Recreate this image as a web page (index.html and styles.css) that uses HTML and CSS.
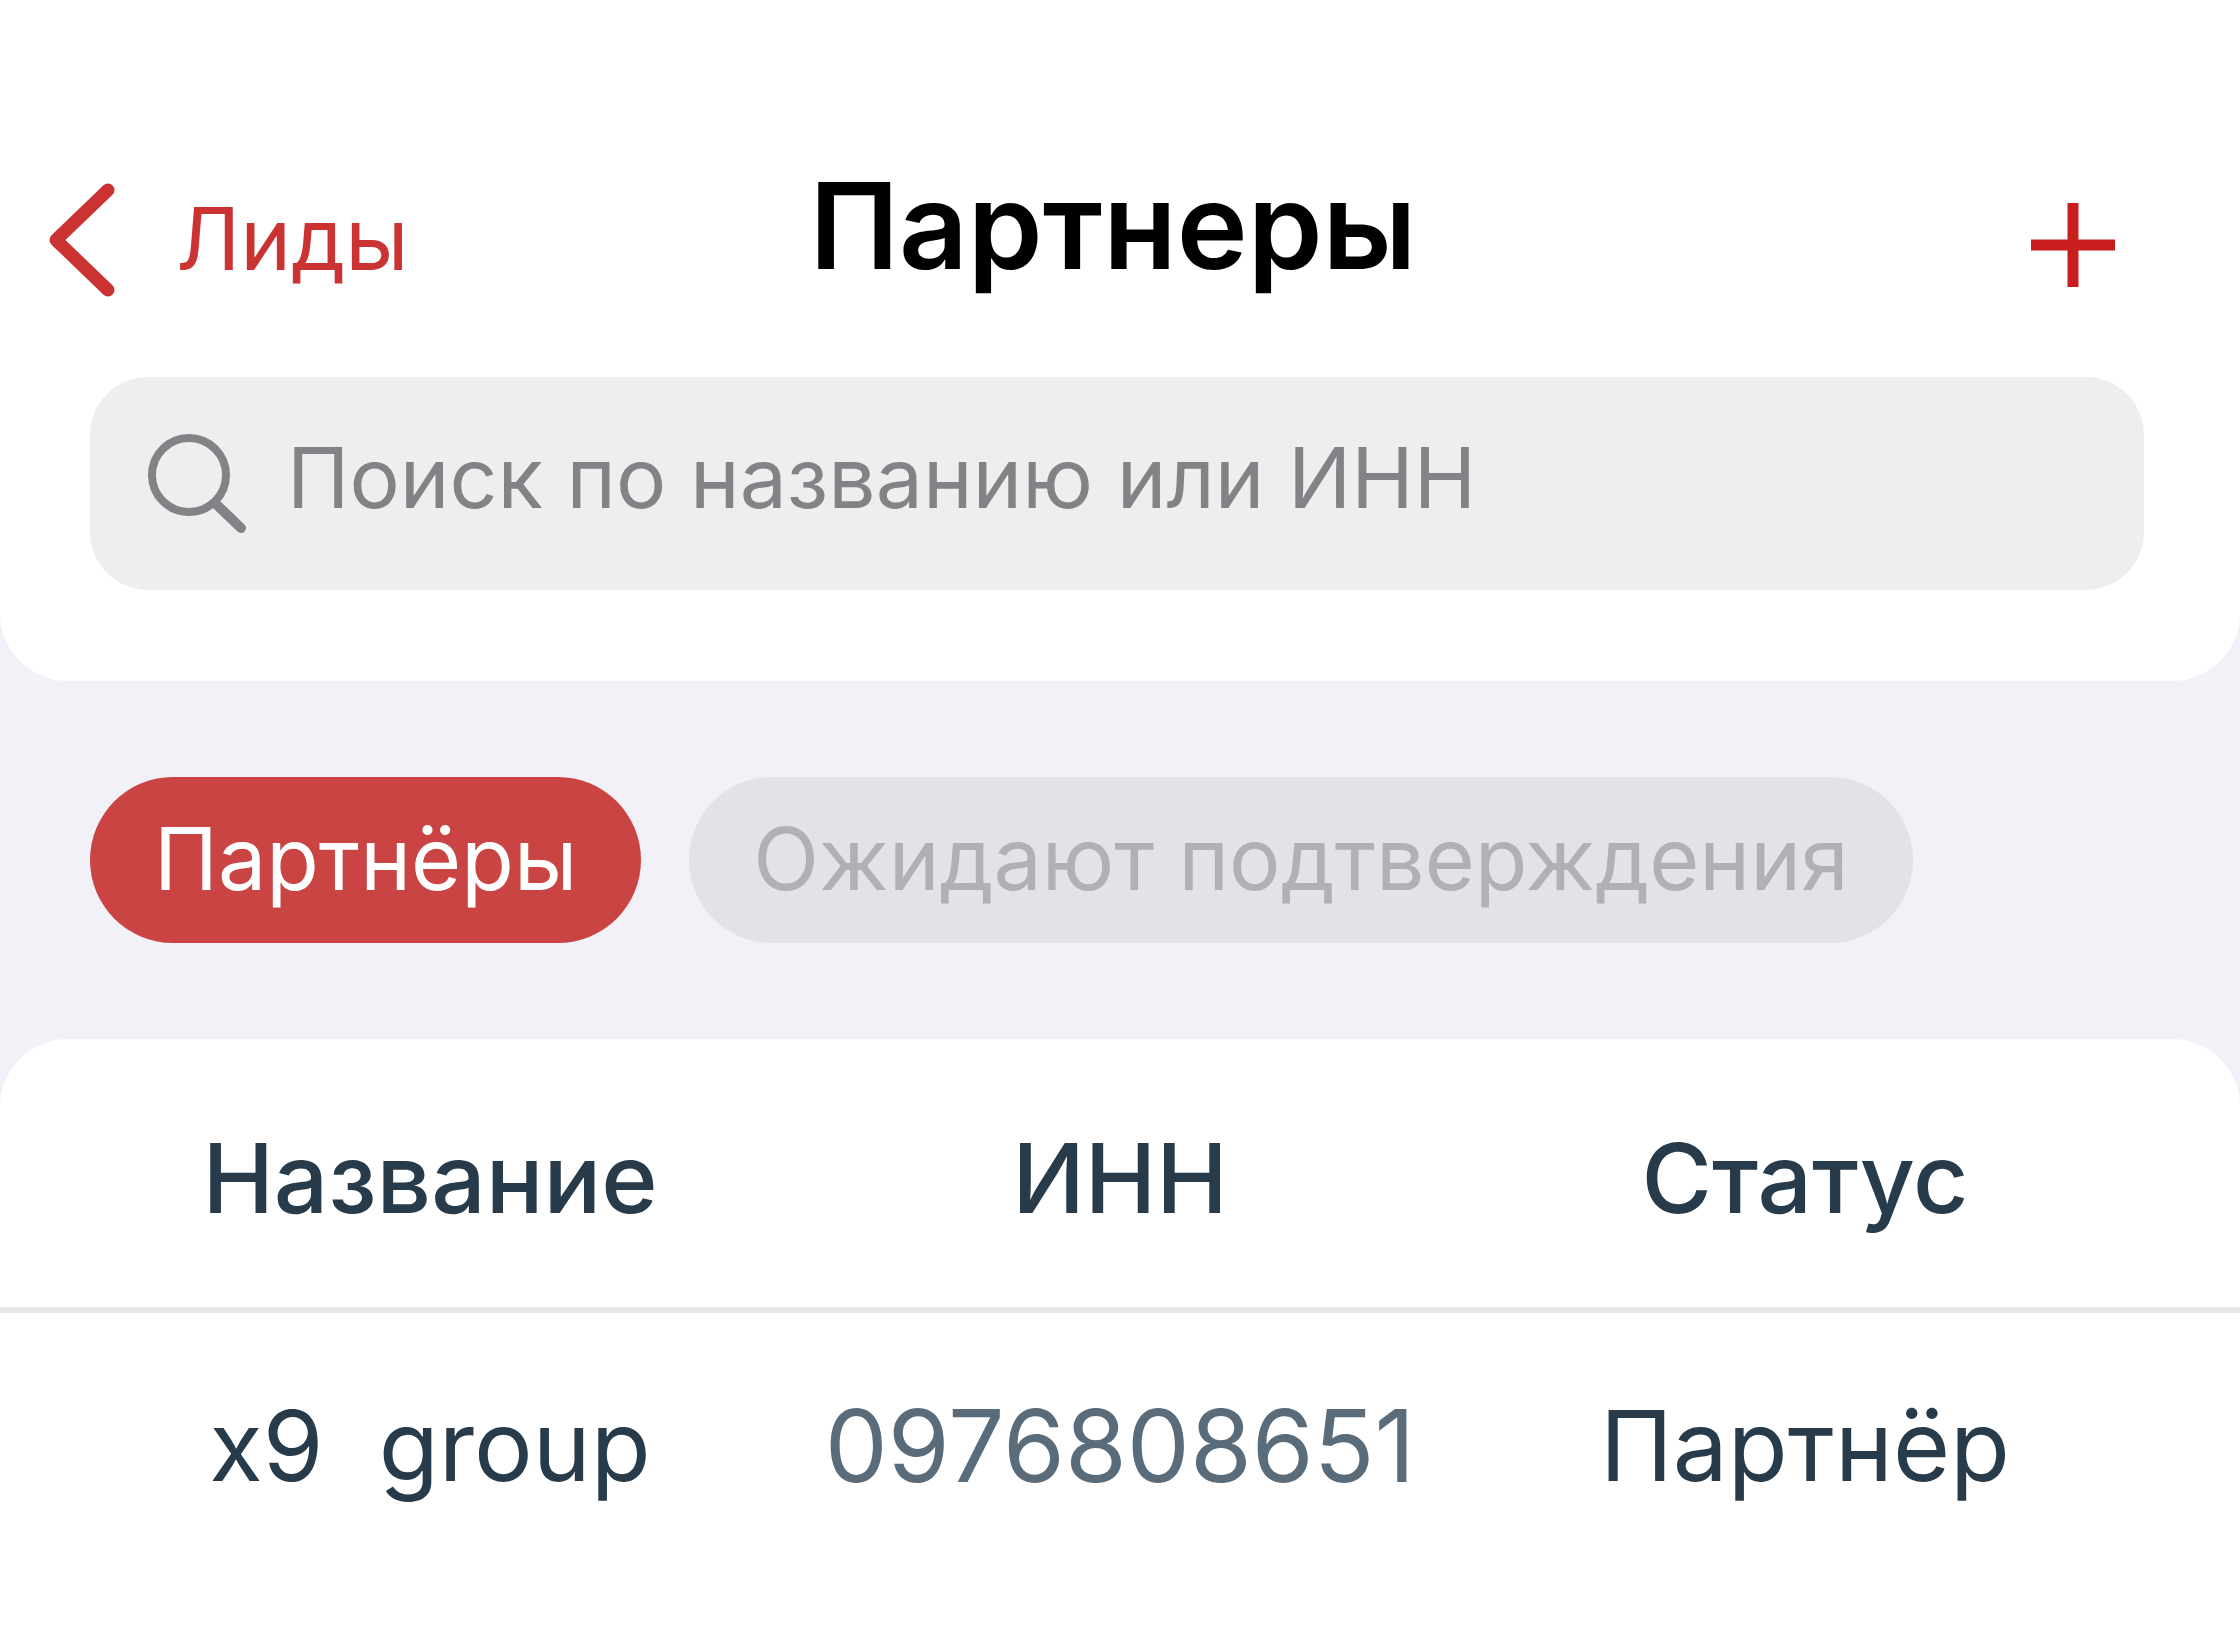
FILE: index.html
```html
<!DOCTYPE html>
<html lang="ru">
<head>
  <meta charset="UTF-8" />
  <meta name="viewport" content="width=device-width, initial-scale=1" />
  <title>Партнеры</title>
  <link rel="stylesheet" href="styles.css">
</head>
<body>

  <header class="header">
    <div class="nav-bar">
      <a href="#" class="back">
        <svg class="back-icon" viewBox="0 0 80 120" fill="none" stroke="currentColor" stroke-width="13" stroke-linecap="round" stroke-linejoin="round" aria-hidden="true">
          <path d="M72 11 L20 61 L72 111" />
        </svg>
        <span>Лиды</span>
      </a>
      <h1>Партнеры</h1>
      <button type="button" class="btn-add" aria-label="Добавить партнера">
        <svg viewBox="0 0 84 84" fill="none" stroke="currentColor" stroke-width="11" aria-hidden="true">
          <path d="M42 0 V84 M0 42 H84" />
        </svg>
      </button>
    </div>

    <label class="search">
      <svg class="search-icon" viewBox="0 0 100 100" fill="none" stroke="currentColor" stroke-width="8" stroke-linecap="round" aria-hidden="true">
        <circle cx="42" cy="41" r="37" />
        <path d="M69 70 L94 94" stroke-width="10" />
      </svg>
      <input type="text" name="search" placeholder="Поиск по названию или ИНН" aria-label="Поиск по названию или ИНН" />
    </label>
  </header>

  <div class="filters">
    <button type="button" class="chip active">Партнёры</button>
    <button type="button" class="chip">Ожидают подтверждения</button>
  </div>

  <main class="partners">
    <table>
      <thead>
        <tr>
          <th scope="col">Название</th>
          <th scope="col">ИНН</th>
          <th scope="col">Статус</th>
        </tr>
      </thead>
      <tbody>
        <tr>
          <td>x9&nbsp; group</td>
          <td class="inn">0976808651</td>
          <td>Партнёр</td>
        </tr>
      </tbody>
    </table>
  </main>

</body>
</html>
```

FILE: styles.css
```css
* {
  box-sizing: border-box;
}

body {
  margin: 0;
  min-height: 100vh;
  display: flex;
  flex-direction: column;
  background-color: #f2f1f7;
  color: #273b4a;
  font-family: Inter, sans-serif;
}

button,
input {
  font-family: inherit;
}

.header {
  background: #fff;
  padding: 153px 0 91px;
  border-radius: 0 0 68px 68px;
}

.nav-bar {
  display: grid;
  grid-template-columns: 1fr auto 1fr;
  align-items: end;
  padding: 0 50px 0 36px;
}

.nav-bar h1 {
  margin: 0;
  color: #000;
  font-size: 120px;
  font-weight: 600;
  line-height: 146px;
}

.back {
  display: flex;
  align-items: center;
  gap: 60px;
  color: #cb3333;
  font-size: 86px;
  line-height: 120px;
  text-decoration: none;
}

.back-icon {
  width: 80px;
  height: 120px;
}

.btn-add {
  justify-self: end;
  display: flex;
  align-items: center;
  height: 108px;
  padding: 0 75px;
  border: none;
  background: none;
  color: #c81e1e;
  cursor: pointer;
}

.btn-add svg {
  width: 84px;
  height: 84px;
}

/* Поиск */
.search {
  display: flex;
  align-items: center;
  gap: 40px;
  height: 213px;
  margin: 78px 96px 0 90px;
  padding: 0 57px;
  border-radius: 58px;
  background-color: #eee;
  color: #838387;
}

.search-icon {
  flex: none;
  width: 100px;
  height: 100px;
}

.search input {
  flex: 1;
  min-width: 0;
  height: 100%;
  padding: 0 0 12px;
  border: none;
  outline: none;
  background: none;
  color: #273b4a;
  font-size: 84px;
}

.search input::placeholder {
  color: #838387;
  opacity: 1;
}

/* Фильтры */
.filters {
  display: flex;
  gap: 48px;
  padding: 96px 90px;
}

.chip {
  height: 166px;
  padding: 0 64px 2px;
  border: none;
  border-radius: 83px;
  background-color: #e3e2e8;
  color: #b0b0b5;
  font-size: 86px;
  white-space: nowrap;
  cursor: pointer;
}

.chip.active {
  background-color: #cb4444;
  color: #fff;
}

/* Таблица партнёров */
.partners {
  flex: 1;
  background: #fff;
  border-radius: 68px 68px 0 0;
}

table {
  width: 100%;
  table-layout: fixed;
  border-collapse: collapse;
}

th,
td {
  width: 30%;
  padding: 74px 0 64px;
  font-size: 96px;
  font-weight: 400;
  line-height: 130px;
  text-align: center;
  white-space: nowrap;
}

th {
  border-bottom: 6px solid #e9e9e9;
  font-weight: 500;
}

td {
  padding-top: 68px;
  font-size: 98px;
}

th:first-child,
td:first-child {
  width: 35%;
  padding-left: 76px;
}

th:last-child,
td:last-child {
  width: 35%;
  padding-right: 86px;
}

td.inn {
  color: #5a6b79;
  font-size: 100px;
}
```
